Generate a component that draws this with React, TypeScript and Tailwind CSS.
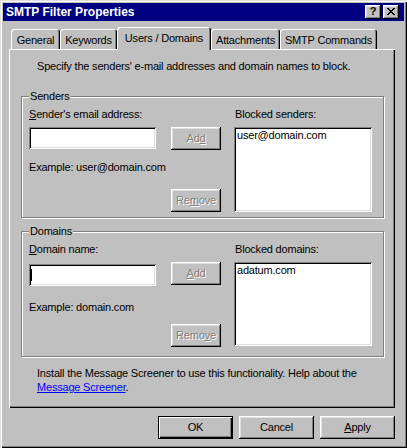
import type { ReactNode } from "react";

const tabs = [
  { label: "General", w: "w-[49px]" },
  { label: "Keywords", w: "w-[57px]" },
  { label: "Users / Domains", w: "w-[94px]", active: true },
  { label: "Attachments", w: "w-[69px]" },
  { label: "SMTP Commands", w: "w-[97px]" },
];

function Btn({
  children,
  disabled,
  primary,
  className = "",
}: {
  children: ReactNode;
  disabled?: boolean;
  primary?: boolean;
  className?: string;
}) {
  return (
    <button
      type="button"
      className={`flex h-[23px] items-center justify-center bg-[#c0c0c0] text-[11px] leading-[13px] tracking-[-0.2px] ${
        primary
          ? "border border-black shadow-[inset_1px_1px_#fff,inset_-1px_-1px_#000,inset_-2px_-2px_#808080]"
          : "shadow-[inset_-1px_-1px_#000,inset_1px_1px_#fff,inset_-2px_-2px_#808080,inset_2px_2px_#dfdfdf]"
      } ${disabled ? "text-[#808080] [text-shadow:1px_1px_0_#fff]" : "text-black"} ${className}`}
    >
      {children}
    </button>
  );
}

function Group({ label, className = "", children }: { label: string; className?: string; children: ReactNode }) {
  return (
    <div
      className={`relative flex w-[363px] border border-[#808080] pl-[7px] pt-[11px] shadow-[inset_1px_1px_#fff,1px_1px_#fff] ${className}`}
    >
      <span className="absolute left-[7px] top-[-7px] bg-[#c0c0c0] px-px leading-[13px]">{label}</span>
      {children}
    </div>
  );
}

const sunken =
  "bg-white shadow-[inset_1px_1px_#808080,inset_-1px_-1px_#fff,inset_2px_2px_#000,inset_-2px_-2px_#dfdfdf]";

export default function App() {
  return (
    <div className="flex h-[448px] w-[407px] flex-col bg-[#c0c0c0] p-[3px] font-['Liberation_Sans',Arial,sans-serif] text-[11px] leading-[13px] tracking-[-0.2px] text-black shadow-[inset_1px_1px_#dfdfdf,inset_2px_2px_#fff,inset_-1px_-1px_#000,inset_-2px_-2px_#808080]">
      {/* title bar */}
      <div className="flex h-[18px] items-center justify-between bg-[#000080] pl-[3px] pr-[5px]">
        <span className="text-[12px] font-bold tracking-normal text-white">SMTP Filter Properties</span>
        <div className="flex gap-[2px]">
          <div className="flex h-[14px] w-[16px] items-center justify-center bg-[#c0c0c0] pb-px text-[11px] font-bold leading-[11px] shadow-[inset_-1px_-1px_#000,inset_1px_1px_#fff,inset_-2px_-2px_#808080,inset_2px_2px_#dfdfdf]">
            ?
          </div>
          <div className="flex h-[14px] w-[16px] items-center justify-center bg-[#c0c0c0] pb-px shadow-[inset_-1px_-1px_#000,inset_1px_1px_#fff,inset_-2px_-2px_#808080,inset_2px_2px_#dfdfdf]">
            <svg width="8" height="7" viewBox="0 0 8 7" shapeRendering="crispEdges">
              <path
                d="M0 0h2v1H0zM6 0h2v1H6zM1 1h2v1H1zM5 1h2v1H5zM2 2h4v1H2zM3 3h2v1H3zM2 4h4v1H2zM1 5h2v1H1zM5 5h2v1H5zM0 6h2v1H0zM6 6h2v1H6z"
                fill="#000"
              />
            </svg>
          </div>
        </div>
      </div>

      {/* tabs */}
      <div className="ml-[8px] mt-[6px] flex h-[22px] items-end">
        {tabs.map((t) =>
          t.active ? (
            <div
              key={t.label}
              className={`relative z-10 -mb-px flex h-[23px] justify-center rounded-t-[3px] bg-[#c0c0c0] pt-[5px] shadow-[inset_1px_1px_#fff,inset_-1px_0_#000,inset_-2px_0_#808080] ${t.w}`}
            >
              {t.label}
            </div>
          ) : (
            <div
              key={t.label}
              className={`flex h-[20px] justify-center rounded-t-[3px] bg-[#c0c0c0] pt-[5px] shadow-[inset_1px_1px_#fff,inset_-1px_0_#000,inset_-2px_0_#808080] ${t.w}`}
            >
              {t.label}
            </div>
          )
        )}
      </div>

      {/* panel */}
      <div className="ml-[6px] h-[359px] w-[386px] bg-[#c0c0c0] pl-[12px] pt-[11px] shadow-[inset_1px_1px_#fff,inset_-1px_-1px_#000,inset_-2px_-2px_#808080]">
        <p className="ml-[16px]">Specify the senders' e-mail addresses and domain names to block.</p>

        <Group label="Senders" className="mt-[23px] h-[122px]">
          <div className="flex w-[127px] flex-col">
            <span>
              <u>S</u>ender's email address:
            </span>
            <div className={`mt-[6px] h-[22px] ${sunken}`} />
            <span className="mt-[12px] whitespace-nowrap">Example: user@domain.com</span>
          </div>
          <div className="ml-[15px] flex w-[50px] flex-col">
            <Btn disabled className="mt-[19px]">
              Ad<u>d</u>
            </Btn>
            <Btn disabled className="mt-[39px]">
              Re<u>m</u>ove
            </Btn>
          </div>
          <div className="ml-[13px] flex w-[138px] flex-col">
            <span className="pl-px">Blocked senders:</span>
            <div className={`mt-[6px] h-[85px] pl-[3px] pt-[2px] ${sunken}`}>user@domain.com</div>
          </div>
        </Group>

        <Group label="Domains" className="mt-[13px] h-[126px]">
          <div className="flex w-[127px] flex-col">
            <span>
              <u>D</u>omain name:
            </span>
            <div className={`mt-[8px] flex h-[22px] items-center pl-[2px] ${sunken}`}>
              <div className="h-[12px] w-px bg-black" />
            </div>
            <span className="mt-[15px] whitespace-nowrap">Example: domain.com</span>
          </div>
          <div className="ml-[15px] flex w-[50px] flex-col">
            <Btn disabled className="mt-[19px]">
              <u>A</u>dd
            </Btn>
            <Btn disabled className="mt-[39px]">
              Remo<u>v</u>e
            </Btn>
          </div>
          <div className="ml-[13px] flex w-[138px] flex-col">
            <span className="pl-px">Blocked domains:</span>
            <div className={`mt-[6px] h-[84px] pl-[3px] pt-[2px] ${sunken}`}>adatum.com</div>
          </div>
        </Group>

        <p className="ml-[16px] mt-[9px] leading-[14px]">
          Install the Message Screener to use this functionality. Help about the
          <br />
          <span className="text-[#0000ff] underline">Message Screener</span>.
        </p>
      </div>

      {/* dialog buttons */}
      <div className="mt-[8px] flex justify-end gap-[6px] pr-[9px]">
        <Btn primary className="w-[75px]">
          OK
        </Btn>
        <Btn className="w-[75px]">Cancel</Btn>
        <Btn className="w-[75px]">
          <u>A</u>pply
        </Btn>
      </div>
    </div>
  );
}
